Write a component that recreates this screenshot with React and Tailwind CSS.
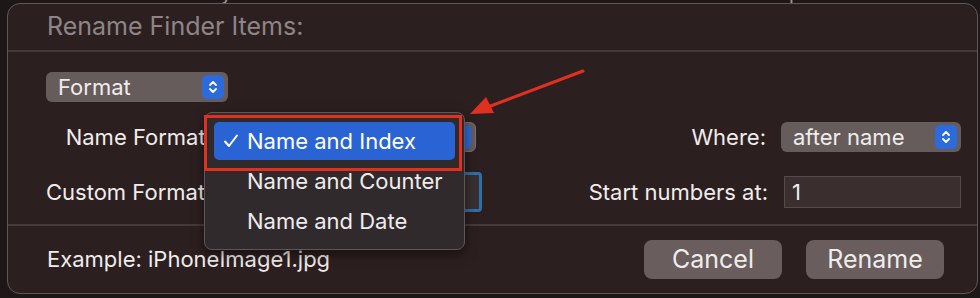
import React from "react";

const font = { fontFamily: "Inter, 'Noto Sans', 'Liberation Sans', sans-serif" };

function Stepper() {
  return (
    <div className="w-[22px] h-[24px] rounded-[5px] bg-[#2c6ade] flex items-center justify-center shrink-0">
      <svg width="10" height="16" viewBox="0 0 10 16" fill="none">
        <path d="M2 6 L5 3 L8 6" stroke="white" strokeWidth="1.8" strokeLinecap="round" strokeLinejoin="round" />
        <path d="M2 10 L5 13 L8 10" stroke="white" strokeWidth="1.8" strokeLinecap="round" strokeLinejoin="round" />
      </svg>
    </div>
  );
}

function Select({ label, className }) {
  return (
    <div className={"h-[30px] rounded-[6px] bg-[#675c5c] flex items-center pl-[12px] pr-[4px] justify-between " + className}>
      <span className="text-[22px] text-[#f0ecec] leading-none">{label}</span>
      <Stepper />
    </div>
  );
}

export default function App() {
  return (
    <div className="relative w-[980px] h-[298px] bg-[#1d1718] overflow-hidden" style={font}>
      <div className="h-[3px] overflow-hidden pl-[80px]">
        <div className="h-[24px] leading-[24px] -translate-y-[19px] text-[20px] text-[#9e9797] whitespace-nowrap tracking-[2px]">
          Automatically rename the selected files in a batch based on a pattern
        </div>
      </div>
      <div className="ml-[7px] w-[971px] h-[291px] rounded-[13px] border border-[#625757] bg-[#2c1f20] flex flex-col">
        {/* Title */}
        <div className="h-[48px] pl-[39px] flex items-center border-b-2 border-[#453a3a]">
          <span className="text-[25px] text-[#8e8686]">Rename Finder Items:</span>
        </div>
        {/* Body */}
        <div className="h-[174px] pl-[38px] pr-[16px] pt-[20px] flex flex-col border-b-2 border-[#453a3a]">
          <Select label="Format" className="w-[182px]" />
          <div className="flex items-center mt-[20px] h-[30px]">
            <div className="w-[166px] text-right text-[22px] text-[#f0ecec] whitespace-nowrap">Name Format:</div>
            <div className="ml-[8px] w-[256px]">
              <Select label="" className="w-full border border-[#7a7070]" />
            </div>
            <div className="flex-1" />
            <div className="text-[22px] text-[#f0ecec]">Where:</div>
            <Select label="after name" className="ml-[15px] w-[180px]" />
          </div>
          <div className="flex items-center mt-[24px] h-[32px]">
            <div className="w-[160px] text-right text-[22px] text-[#f0ecec] whitespace-nowrap">Custom Format:</div>
            <div className="ml-[14px] w-[262px] h-[40px] rounded-[4px] border-[3px] border-[#2f6fa8] bg-[#3a2f30]" />
            <div className="flex-1" />
            <div className="text-[22px] text-[#f0ecec]">Start numbers at:</div>
            <div className="ml-[16px] w-[177px] h-[32px] bg-[#3a2e2f] border border-[#564b4b] flex items-center pl-[7px]">
              <span className="text-[22px] text-[#f0ecec]">1</span>
            </div>
          </div>
        </div>
        {/* Footer */}
        <div className="flex-1 pl-[39px] pr-[33px] flex items-center">
          <span className="text-[22px] text-[#f0ecec]">Example: iPhoneImage1.jpg</span>
          <div className="flex-1" />
          <button className="w-[138px] h-[39px] rounded-[8px] bg-[#695d5d] text-[25px] text-[#f0ecec]">Cancel</button>
          <button className="ml-[24px] w-[138px] h-[39px] rounded-[8px] bg-[#695d5d] text-[25px] text-[#f0ecec]">Rename</button>
        </div>
      </div>

      {/* Dropdown menu overlay */}
      <div className="absolute left-[204px] top-[112px] w-[261px] h-[138px] rounded-[8px] bg-[#312a2c] border border-[#5e5658] shadow-[0_4px_12px_rgba(0,0,0,0.5)] px-[9px] pt-[9px] flex flex-col">
        <div className="h-[38px] rounded-[5px] bg-[#2a63d3] flex items-center pl-[9px]">
          <svg width="16" height="14" viewBox="0 0 16 14" fill="none" className="shrink-0">
            <path d="M2 7.5 L6 12 L14 1.5" stroke="white" strokeWidth="2" strokeLinecap="round" strokeLinejoin="round" />
          </svg>
          <span className="ml-[8px] text-[22px] text-white">Name and Index</span>
        </div>
        <div className="h-[42px] flex items-center pl-[33px] text-[22px] text-[#f0ecec]">Name and Counter</div>
        <div className="h-[38px] flex items-center pl-[33px] text-[22px] text-[#f0ecec]">Name and Date</div>
      </div>

      {/* Red annotation */}
      <div className="absolute left-[204px] top-[115px] w-[258px] h-[56px] border-[3px] border-[#e0301f]" />
      <svg className="absolute left-0 top-0" width="980" height="298" viewBox="0 0 980 298">
        <line x1="583" y1="71" x2="488" y2="107" stroke="#e0301f" strokeWidth="3" strokeLinecap="round" />
        <polygon points="470,114 486,97 494,113" fill="#e0301f" />
      </svg>
    </div>
  );
}
